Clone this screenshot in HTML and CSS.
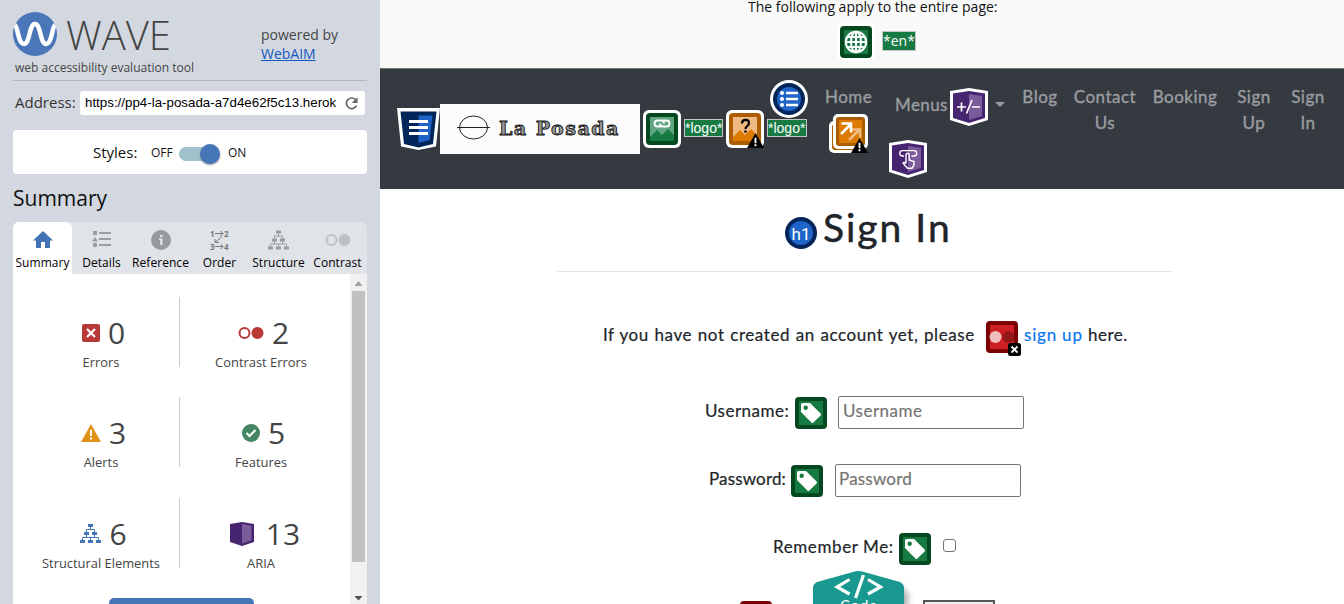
FILE: index.html
```html
<!DOCTYPE html>
<html lang="en">
<head>
<meta charset="utf-8">
<title>WAVE Report</title>
<link rel="stylesheet" href="styles.css">
</head>
<body>
<svg class="defs" aria-hidden="true">
  <symbol id="tree" viewBox="0 0 21 19"><path d="M8 0h5v3H8zM4 8h5v3H4zM12 8h5v3h-5zM0 16h5v3H0zM8 16h5v3H8zM16 16h5v3h-5z" fill="currentColor"/><path d="M10.500 3v2.500M6.500 8V5.500h8V8M6.500 11v2.500M14.500 11v2.500M2.500 16v-2.500h16V16M10.500 13.500V16" fill="none" stroke="currentColor"/></symbol>
  <symbol id="tag" viewBox="0 0 32 32"><rect width="32" height="32" rx="4" fill="#04481f"/><path d="M4 4h24v24H4z" fill="#177a43"/><path fill-rule="evenodd" d="M7.500 6H15l10.600 10.600q1 1 0 2L18.400 25.500q-1 1-2 0L6 15V7.500Q6 6 7.500 6zM10.700 8.500a2.200 2.200 0 1 0 0 4.400 2.200 2.200 0 0 0 0-4.400z" fill="#fff"/></symbol>
  <symbol id="warn" viewBox="0 0 18 16"><path d="M9 0l9 16H0z"/><path d="M8 5h2v6H8zM8 12h2v2H8z" fill="#fff"/></symbol>
</svg>
<div class="app">
<aside class="side">
  <header class="brand">
    <div class="brand-main">
      <div class="brand-line">
        <svg class="mark" viewBox="0 0 44 44"><circle cx="22" cy="22" r="22" fill="#4977b8"/><path d="M2 13C5 15 5 32 11 32S16 12 22 12s5 20 11 20 6-17 9-19" fill="none" stroke="#fff" stroke-width="4.500"/></svg>
        <span class="wave">WAVE</span>
      </div>
      <div class="tagline">web accessibility evaluation tool</div>
    </div>
    <div class="powered">powered by<br><a href="#">WebAIM</a></div>
  </header>
  <div class="address">
    <span class="address-label">Address:</span>
    <div class="url"><span class="url-text">https://pp4-la-posada-a7d4e62f5c13.heroku</span>
      <svg width="13" height="13" viewBox="0 0 13 13"><path d="M11 3.200A5.300 5.300 0 1 0 11.500 8.500" fill="none" stroke="#666" stroke-width="1.700"/><path d="M12.500 0v6H6.800z" fill="#666"/></svg>
    </div>
  </div>
  <div class="styles"><span class="styles-label">Styles:</span><span class="sw-off">OFF</span><span class="switch"><i></i></span><span class="sw-on">ON</span></div>
  <h2 class="side-title">Summary</h2>
  <nav class="tabs">
    <div class="tab active"><svg width="20" height="18" viewBox="0 0 20 18"><path d="M10 0l10 9.500h-3V17h-5v-6H8v6H3V9.500H0z" fill="#4473b5"/></svg><span>Summary</span></div>
    <div class="tab"><svg width="20" height="18" viewBox="0 0 20 18"><path d="M1 0h4v4H1zM3 6l3 4.500H0zM7 1h12v2H7zM7 7h12v2H7zM7 13h12v2H7z" fill="#9b9d9f"/><circle cx="3" cy="14" r="2.200" fill="#9b9d9f"/></svg><span>Details</span></div>
    <div class="tab"><svg width="20" height="20" viewBox="0 0 20 20"><circle cx="10" cy="10" r="10" fill="#989b9e"/><path d="M9 5h2.500v2H9zM8 8.500h3.500V15H9.200v-5H8z" fill="#e0e3e7"/></svg><span>Reference</span></div>
    <div class="tab"><svg class="order" width="20" height="20" viewBox="0 0 20 20"><g class="order-num"><text x="0" y="6.500">1</text><text x="14" y="6.500">2</text><text x="0" y="19.500">3</text><text x="14" y="19.500">4</text></g><path d="M5 3.500h8M10.500 1L13 3.500 10.500 6M5 16.500h8M10.500 14l2.500 2.500-2.500 2.500M12 6.500l-7 6M5 9v3.500h4" fill="none" stroke="#777"/></svg><span>Order</span></div>
    <div class="tab tree-tab"><svg width="21" height="19"><use href="#tree"/></svg><span>Structure</span></div>
    <div class="tab"><svg width="26" height="20" viewBox="0 0 26 20"><circle cx="6.500" cy="10" r="5" fill="none" stroke="#bec1c4" stroke-width="2"/><circle cx="19.500" cy="10" r="6" fill="#bec1c4"/></svg><span>Contrast</span></div>
  </nav>
  <div class="panel">
    <div class="stats">
      <div class="stat left"><div class="num"><svg width="18" height="18" viewBox="0 0 18 18"><rect width="18" height="18" rx="2" fill="#b93838"/><path d="M5 5l8 8M13 5l-8 8" stroke="#fff" stroke-width="2.200"/></svg><b>0</b></div><span>Errors</span></div>
      <div class="stat"><div class="num"><svg width="26" height="18" viewBox="0 0 26 18"><circle cx="6.500" cy="9" r="5" fill="none" stroke="#b93838" stroke-width="2"/><circle cx="19.500" cy="9" r="6" fill="#b93838"/></svg><b>2</b></div><span>Contrast Errors</span></div>
      <div class="stat left"><div class="num"><svg width="20" height="18" viewBox="0 0 20 18"><path d="M10 0l10 18H0z" fill="#e29219"/><path d="M9 6h2v6H9zM9 13.500h2v2H9z" fill="#fff"/></svg><b>3</b></div><span>Alerts</span></div>
      <div class="stat"><div class="num"><svg width="18" height="18" viewBox="0 0 18 18"><circle cx="9" cy="9" r="9" fill="#448563"/><path d="M4.500 9l3 3 6-6" fill="none" stroke="#fff" stroke-width="2"/></svg><b>5</b></div><span>Features</span></div>
      <div class="stat left"><div class="num blue"><svg width="21" height="19"><use href="#tree"/></svg><b>6</b></div><span>Structural Elements</span></div>
      <div class="stat"><div class="num aria"><svg width="24" height="24" viewBox="0 0 24 24"><path d="M0 2l12-2 12 2v18l-12 4-12-4z" fill="#472470"/><path d="M12 2l9.500 1.700v14.800L12 21.500z" fill="#7c5b9b"/></svg><b>13</b></div><span>ARIA</span></div>
    </div>
    <div class="button-line"><div class="details-btn"></div></div>
    <div class="scroll"><svg width="9" height="5"><path d="M4.500 0L8.500 5h-8z" fill="#a0a0a0"/></svg><i></i><svg width="9" height="5"><path d="M.5 0h8l-4 4.500z" fill="#505050"/></svg></div>
  </div>
</aside>
<main class="page">
  <div class="page-info">
    <div class="info-text">The following apply to the entire page:</div>
    <div class="info-icons">
      <svg width="38" height="38" viewBox="-3 -3 38 38"><rect x="-3" y="-3" width="38" height="38" rx="6" fill="#fff"/><rect width="32" height="32" rx="4" fill="#04481f"/><path d="M4 4h24v24H4z" fill="#177a43"/><g fill="none" stroke="#fff" stroke-width="2"><circle cx="16" cy="16" r="10.200"/><ellipse cx="16" cy="16" rx="5" ry="10.200"/><path d="M16 6v20M6 16h20M7.500 11h17M7.500 21h17"/></g></svg>
      <span class="alt en">*en*</span>
    </div>
  </div>
  <nav class="navbar">
    <svg class="n-css" width="43" height="43" viewBox="0 0 43 43"><path d="M0 0h43l-4 38.500L21.500 42 4 38.500z" fill="#fff"/><path d="M3.500 3.500h36L36 36l-14.500 3.500L7 36z" fill="#02265a"/><path d="M21.500 7.500H35.500L32.500 32l-11 3z" fill="#1f64c8"/><path d="M12 12h19v3H12zM12 18h19v3H12zM12 24h19v3H12z" fill="#fff"/></svg>
    <div class="logo"><svg width="34" height="26" viewBox="0 0 34 26"><ellipse cx="16.500" cy="12.500" rx="14" ry="11.500" fill="none" stroke="#222"/><path d="M0 12.500h33" stroke="#222"/></svg><span>La Posada</span></div>
    <svg class="n-img" width="38" height="38" viewBox="0 0 38 38"><rect width="38" height="38" rx="6" fill="#fff"/><rect x="3" y="3" width="32" height="32" rx="4" fill="#04481f"/><path d="M7 7h24v24H7z" fill="#5fa57f"/><path d="M7 27l7-7 5 5 6-6 6 6v6H7z" fill="#177a43"/><path d="M18 16.500h-3.500a3 3 0 0 1 0-6H18q3 0 3 3M20 10.500h3.500a3 3 0 0 1 0 6H20q-3 0-3-3" fill="none" stroke="#fff" stroke-width="1.800"/></svg>
    <span class="alt first-alt">*logo*</span>
    <svg class="n-q" width="38" height="38" viewBox="0 0 38 38"><rect width="38" height="38" rx="6" fill="#fff"/><rect x="3" y="3" width="32" height="32" rx="4" fill="#ac5d00"/><path d="M7 7h24v24H7z" fill="#efba82"/><path d="M7 27l7-7 5 5 6-6 6 6v6H7z" fill="#dd7b00"/><path d="M16 13.500c0-5 7-4.500 7-.5 0 3-3.500 3-3.500 6" fill="none" stroke="#000" stroke-width="2.200"/><circle cx="19.500" cy="21.500" r="1.300"/><use href="#warn" x="21" y="23" width="17" height="15"/></svg>
    <div class="n-list"><svg width="38" height="38" viewBox="0 0 38 38"><circle cx="19" cy="19" r="19" fill="#fff"/><circle cx="19" cy="19" r="16" fill="#02265a"/><circle cx="19" cy="19" r="12" fill="#1f64c8"/><path d="M16 11.700h12v2.500H16zM16 17.700h12v2.500H16zM16 23.700h12v2.500H16z" fill="#fff"/><g fill="#fff"><circle cx="12" cy="13" r="2"/><circle cx="12" cy="19" r="2"/><circle cx="12" cy="25" r="2"/></g></svg><span class="alt">*logo*</span></div>
    <div class="n-home jo">Home<svg width="39" height="39" viewBox="0 0 39 39"><rect y="7" width="32" height="32" rx="5" fill="#fff"/><rect x="3" y="10" width="28" height="26" rx="3" fill="#ac5d00"/><rect x="4" width="35" height="35" rx="5" fill="#fff"/><rect x="7" y="3" width="29" height="29" rx="3" fill="#ac5d00"/><path d="M10 6h23v23H10z" fill="#dd7b00"/><path d="M20 26l11-11M23 15.500h8v8" fill="none" stroke="#f0bd84" stroke-width="2.500"/><path d="M12 20L22 10M12.500 9.500H22v9" fill="none" stroke="#fff" stroke-width="2.500"/><use href="#warn" x="22" y="24" width="17" height="15"/></svg></div>
    <div class="n-menus jo"><div class="menus-line"><span>Menus</span><svg width="38" height="38" viewBox="0 0 38 38"><path d="M0 3L19 0l19 3v29l-19 6-19-6z" fill="#fff"/><path d="M3 5.500L19 3l16 2.500V30l-16 5-16-5z" fill="#472470"/><path d="M19 6l13 2v20l-13 4z" fill="#7c5b9b"/><path d="M7 19h9M11.500 14.500v9M16.500 25.500L22 12M22 19h8" stroke="#fff" stroke-width="1.700"/></svg><i class="caret"></i></div>
      <svg width="38" height="38" viewBox="0 0 38 38"><path d="M0 3L19 0l19 3v29l-19 6-19-6z" fill="#fff"/><path d="M3 5.500L19 3l16 2.500V30l-16 5-16-5z" fill="#472470"/><path d="M19 6l13 2v20l-13 4z" fill="#7c5b9b"/><path d="M15 16h-1.500a2.700 2.700 0 0 1 0-5.400h11.500a2.700 2.700 0 0 1 0 5.400H22.500M17 23.500v-9q1.600-2.500 3.200 0v5.500l4.800 1.500V25l-2 3.200h-4.500l-4.500-5q.5-1.500 3 .3" fill="none" stroke="#fff" stroke-width="1.400"/></svg></div>
    <div class="n-link jo blog">Blog</div><div class="n-link jo contact">Contact<br>Us</div><div class="n-link jo booking">Booking</div><div class="n-link jo signup">Sign<br>Up</div><div class="n-link jo signin">Sign<br>In</div>
  </nav>
  <section class="content jo">
    <div class="h-row"><svg width="32" height="32" viewBox="0 0 32 32"><circle cx="16" cy="16" r="16" fill="#02265a"/><circle cx="16" cy="16" r="12" fill="#1f64c8"/><text class="h1-mark" x="16" y="22.500">h1</text></svg><h1>Sign In</h1></div>
    <div class="intro"><span class="sentence">If you have not created an account yet, please</span><svg width="35" height="35" viewBox="0 0 35 35"><rect width="32" height="32" rx="4" fill="#7b0000"/><path d="M4 4h24v24H4z" fill="#ce2023"/><circle cx="9.500" cy="16" r="6" fill="#f0bcbd"/><circle cx="22.500" cy="16" r="6" fill="#94181a"/><rect x="22" y="22" width="13" height="13" rx="2.500"/><path d="M25.500 25.500l6 6M31.500 25.500l-6 6" stroke="#fff" stroke-width="1.800"/></svg><a href="#">sign up</a><span class="here">here.</span></div>
    <div class="field user"><label>Username:</label><svg width="32" height="32"><use href="#tag"/></svg><span class="box"><em>Username</em></span></div>
    <div class="field pass"><label>Password:</label><svg width="32" height="32"><use href="#tag"/></svg><span class="box"><em>Password</em></span></div>
    <div class="field remember"><label>Remember Me:</label><svg width="32" height="32"><use href="#tag"/></svg><span class="check"></span></div>
    <div class="bottom"><i class="red-top"></i><svg width="101" height="33" viewBox="0 0 101 33"><path d="M84 14l11 8v14H78z" class="hex-shadow"/><path d="M0 33V17q0-4 4-6L40 1q5-2 11 0l36 10q4 2 4 6v16z" fill="#19988f"/><path d="M36.500 8.500L24 16l12.500 7M55 8.500L67.500 16 55 23M50.500 4l-8 23" fill="none" stroke="#fff" stroke-width="3.200"/><text x="46" y="40" class="code-text">Code</text></svg><i class="btn-top"></i></div>
  </section>
</main>
</div>
</body>
</html>
```
FILE: styles.css
```css
* { box-sizing: border-box; }
body { margin: 0; background: #fff; font-family: "Open Sans", sans-serif; overflow: hidden; }
svg { display: block; flex: none; }
.defs { position: absolute; width: 0; height: 0; }
.app { display: flex; width: 1344px; height: 604px; overflow: hidden; }

.side { width: 380px; height: 604px; flex: none; background: #d3d8e0; padding: 0 13px; color: #111; }
.brand { display: flex; height: 81px; border-bottom: 1px solid #b1b4b9; padding-top: 12px; color: #444; }
.brand-main { width: 248px; }
.brand-line { display: flex; height: 44px; }
.mark { width: 44px; height: 44px; }
.wave { margin-left: 9px; font-size: 40px; font-weight: 300; line-height: 46px; }
.tagline { margin: 2px 0 0 2px; font-size: 12px; line-height: 20px; }
.powered { padding-top: 13px; font-size: 14px; line-height: 19px; white-space: nowrap; }
.powered a { color: #1559c0; }
.address { display: flex; margin-top: 10px; height: 24px; }
.address-label { width: 67px; padding-left: 2px; font-size: 15px; line-height: 23px; color: #333; }
.url { display: flex; align-items: center; width: 285px; background: #fff; border-radius: 3px; padding-left: 5px; }
.url-text { width: 251px; margin-right: 9px; overflow: hidden; white-space: nowrap; color: #000; font: 13.33px/24px "Liberation Sans", sans-serif; }
.styles { display: flex; align-items: center; height: 44px; margin-top: 15px; padding-left: 80px; background: #fff; border-radius: 4px; }
.styles-label { width: 58px; font-size: 15px; }
.sw-off { width: 28px; font-size: 12px; }
.switch { width: 40px; height: 14px; background: #9fc1cb; border-radius: 7px; margin-top: 4px; }
.switch i { display: block; width: 20px; height: 20px; margin: -3px 0 0 21px; border-radius: 50%; background: #4676b8; box-shadow: 0 1px 2px #888; }
.sw-on { margin-left: 9px; font-size: 12px; }
.side-title { margin: 9px 0 0; height: 39px; font-size: 21px; font-weight: 400; line-height: 30px; }
.tabs { display: flex; height: 52px; background: #e0e3e7; border-radius: 6px 6px 0 0; }
.tab { display: flex; flex-direction: column; align-items: center; width: 59px; padding-top: 8px; font-size: 12px; border-radius: 6px 6px 0 0; }
.tab svg { height: 20px; }
.order { overflow: visible; }
.tab span { line-height: 18px; margin-top: 4px; white-space: nowrap; color: #000; letter-spacing: .05px; }
.active { background: #fff; }
.tree-tab { color: #999b9e; }
.order-num { font: bold 8px "Open Sans", sans-serif; fill: #777; }
.panel { display: grid; grid-template-columns: 337px 17px; grid-template-rows: 324px 6px; height: 330px; background: #fff; }
.stats { display: grid; grid-template-columns: 158px 162px; grid-auto-rows: 70px; row-gap: 30.4px; padding: 23px 0 0 9px; }
.stat { display: flex; flex-direction: column; align-items: center; color: #444; font-size: 12.9px; }
.left { border-right: 1px solid #ccc; }
.num { display: flex; align-items: center; height: 59px; padding: 15px 0 0 5px; gap: 8px; }
.num b { font-size: 30px; line-height: 42px; font-weight: 370; }
.stat span { line-height: 16px; white-space: nowrap; }
.left .num { padding-left: 6px; }
.left span { padding-left: 1px; }
.blue { color: #4475b7; }
.blue b { color: #444; }
.num.aria { gap: 12px; padding-left: 8px; }
.button-line { grid-row: 2; }
.details-btn { width: 145px; height: 30px; margin-left: 96px; border-radius: 5px; background: #4676b8; }
.scroll { grid-column: 2; grid-row: 1 / 3; display: flex; flex-direction: column; align-items: center; background: #f1f1f1; padding-top: 7px; }
.scroll i { width: 13px; height: 271px; margin: 5px 0 34px; background: #c1c1c1; }

.page { width: 964px; height: 604px; overflow: hidden; }
.page-info { height: 69px; background: #f9f9f9; border-bottom: 1px solid #6f7a6b; }
.info-text { height: 23px; padding-left: 368px; font-size: 14px; line-height: 14px; color: #111; white-space: nowrap; }
.info-icons { display: flex; padding-left: 457px; }
.alt { display: block; height: 18px; border: 1px solid #c5c5c5; background: #177a43; color: #fff; font: 14px/16px "Liberation Sans", sans-serif; white-space: nowrap; }
.en { width: 34px; height: 20px; margin: 8px 0 0 7px; font: 14px/18px "Open Sans", sans-serif; }
.navbar { display: flex; height: 120px; background: #353a40; color: #9a9da0; -webkit-text-stroke: .35px #9a9da0; }
.navbar .alt { -webkit-text-stroke: 0; }
.jo { font-family: Lato, sans-serif; font-size: 17px; letter-spacing: .5px; }
.n-css { margin: 39px 0 0 17px; }
.logo { display: flex; width: 200px; height: 50px; margin-top: 35px; padding: 11px 0 0 17px; background: #fcfcfc; color: #999; }
.logo span { margin-left: 8px; font: bold 19px/26px "DejaVu Serif", serif; letter-spacing: 1.500px; -webkit-text-stroke: .9px #111; white-space: nowrap; }
.n-img { margin: 41px 3px 0; }
.first-alt { width: 39px; margin-top: 50px; }
.n-q { margin: 41px 3px 0; }
.n-list { width: 40px; margin-top: 11px; }
.n-list svg { margin-left: 3px; }
.n-list .alt { width: 40px; margin-top: 1px; }
.n-home { width: 48px; margin: 15px 0 0 18px; line-height: 26px; }
.n-home svg { margin: 4px 0 0 4px; }
.n-menus { width: 111px; margin: 19px 0 0 16px; }
.menus-line { display: flex; padding-left: 6px; height: 52px; line-height: 33px; letter-spacing: .4px; }
.menus-line span { flex: none; width: 55px; }
.caret { width: 0; height: 0; margin: 14px 0 0 7px; border: 5px solid transparent; border-top-color: #9a9da0; border-bottom: 0; }
.n-link { margin-top: 15px; line-height: 26px; text-align: center; white-space: nowrap; }
.blog { width: 36px; margin-left: 22px; }
.contact { width: 64px; margin-left: 15px; }
.booking { width: 66px; margin-left: 15px; }
.signup, .signin { width: 36px; margin-left: 18px; }

.content { color: #212529; white-space: nowrap; -webkit-text-stroke: .2px; }
.h-row { display: flex; width: 615px; height: 83px; margin-left: 177px; padding: 28px 0 0 228px; border-bottom: 1px solid #e3e4e4; }
h1 { margin: -18px 0 0 6px; font-size: 39px; line-height: 57px; font-weight: 400; letter-spacing: 2px; -webkit-text-stroke: .5px; }
.intro { display: flex; margin: 49px 0 0 223px; height: 35px; line-height: 27px; }
.sentence { width: 383px; letter-spacing: .58px; word-spacing: .7px; }
.intro a { margin-left: 3px; width: 64px; color: #0a78f5; text-decoration: none; letter-spacing: .8px; }
.field { display: flex; height: 34px; }
.user { margin: 40px 0 0 325px; }
.pass { margin: 34px 0 0 329px; }
.remember { margin: 34px 0 0 393px; }
.field label { line-height: 29px; width: 90px; }
.pass label { width: 82px; letter-spacing: .15px; }
.remember label { width: 126px; letter-spacing: .6px; }
.field svg { margin-top: 1px; }
.box { width: 186px; height: 33px; margin-left: 11px; border: 1px solid #767676; border-radius: 2px; line-height: 28px; padding-left: 4px; color: #757575; }
.box em { font-style: normal; }
.pass .box { margin-left: 12px; padding-left: 3px; letter-spacing: .2px; }
.check { width: 13px; height: 13px; margin: 7px 0 0 12px; border: 1px solid #767676; border-radius: 3px; }
.bottom { display: flex; margin: 5px 0 0 360px; }
.red-top { width: 32px; height: 32px; margin: 30px 41px 0 0; border-radius: 4px; background: #7b0000; }
.btn-top { width: 72px; height: 34px; margin: 29px 0 0 9px; border: 2px solid #555; background: #efefef; }
.h1-mark { fill: #fff; font-size: 17px; font-family: Roboto, sans-serif; text-anchor: middle; letter-spacing: 0; }
.hex-shadow { fill: #aaa; filter: blur(3px); }
.code-text { fill: #fff; font: 15px Lato, sans-serif; letter-spacing: .8px; text-anchor: middle; }
```
